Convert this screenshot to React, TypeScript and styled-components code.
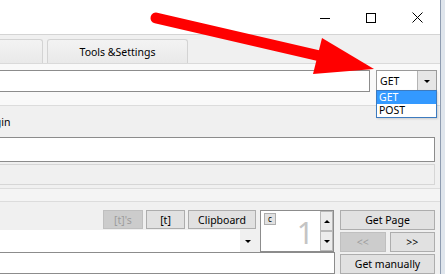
import React from 'react';
import styled, { createGlobalStyle } from 'styled-components';

const GlobalStyle = createGlobalStyle`
  html, body {
    margin: 0;
    padding: 0;
  }
  body {
    width: 445px;
    height: 274px;
    overflow: hidden;
    background: #dfe5ec;
    font-family: "Noto Sans", "Open Sans", sans-serif;
    font-size: 10.5px;
    color: #000;
  }
  * {
    box-sizing: border-box;
  }
`

const Stage = styled.div`
  position: relative;
  width: 445px;
  height: 274px;
  overflow: hidden;
`

const Window = styled.div`
  display: flex;
  flex-direction: column;
  width: 541px;
  height: 274px;
  margin-left: -100px;
  background: #f0f0f0;
  border-right: 1px solid #8d9bb0;
`

const TitleBar = styled.div`
  display: flex;
  justify-content: flex-end;
  height: 35px;
  padding-top: 1px;
  background: #fff;
  border-bottom: 1px solid #d4d4d4;
`

const CaptionButton = styled.div`
  display: flex;
  width: 46px;
  align-items: center;
  justify-content: center;
`

const TabStrip = styled.div`
  display: flex;
  gap: 4px;
  height: 29px;
  padding: 4px 0 0 2px;
  background: #f0f0f0;
  border-bottom: 1px solid #dadada;
`

const Tab = styled.div`
  display: flex;
  width: 141px;
  height: 24px;
  align-items: center;
  justify-content: center;
  background: linear-gradient(#f3f3f3, #e9e9e9);
  border: 1px solid #d3d3d3;
  border-bottom: none;
  border-radius: 3px 3px 0 0;
  font-size: 10.5px;
`

const TabPage = styled.div`
  display: flex;
  flex: 1;
  flex-direction: column;
  background: #f9f9f9;
`

const UrlRow = styled.div`
  display: flex;
  gap: 6px;
  padding: 6px 3px 0 8px;
  height: 41px;
`

const TextBox = styled.div<{ $height?: number }>`
  flex: 1;
  height: ${p => p.$height ?? 22}px;
  background: #fff;
  border: 1px solid #8c8c8c;
`

const Combo = styled.div`
  position: relative;
  display: flex;
  width: 61px;
  height: 22px;
  background: #fff;
  border: 1px solid #9a9a9a;
`

const ComboText = styled.div`
  display: flex;
  flex: 1;
  align-items: center;
  padding-left: 3px;
`

const ComboArrow = styled.div<{ $flat?: boolean }>`
  display: flex;
  width: ${p => (p.$flat ? 16 : 19)}px;
  align-items: center;
  justify-content: center;
  background: ${p => (p.$flat ? '#f0f0f0' : '#e6e6e6')};
  border-left: ${p => (p.$flat ? 'none' : '1px solid #b4b4b4')};

  &::after {
    content: '';
    border-left: 3px solid transparent;
    border-right: 3px solid transparent;
    border-top: 3px solid #000;
  }
`

const DropList = styled.div`
  position: absolute;
  top: calc(100% - 1px);
  left: -1px;
  right: -1px;
  background: #fff;
  border: 1px solid #3d7bbf;
  box-shadow: 1px 1px 2px rgba(0, 0, 0, 0.15);
`

const DropItem = styled.div<{ $active?: boolean }>`
  height: 13px;
  line-height: 13px;
  padding-left: 2px;
  background: ${p => (p.$active ? '#3399ff' : 'transparent')};
  color: ${p => (p.$active ? '#fff' : '#000')};
`

const Panel = styled.div`
  display: flex;
  flex: 1;
  flex-direction: column;
  padding: 8px 5px 0 8px;
  background: #f0f0f0;
  border-top: 1px solid #dcdcdc;
`

const Label = styled.div`
  height: 16px;
  margin: 0 0 7px 75px;
  line-height: 16px;
`

const DisabledBox = styled.div`
  height: 21px;
  margin-top: 2px;
  background: #f0f0f0;
  border: 1px solid #d6d6d6;
`

const Splitter = styled.div`
  height: 14px;
  margin: 3px -5px 0 -8px;
  background: #f4f4f4;
  border-top: 1px solid #dcdcdc;
  border-bottom: 1px solid #dcdcdc;
`

const Controls = styled.div`
  display: grid;
  grid-template-columns: 1fr 84px 95px;
  grid-template-rows: 20px 22px 22px;
  padding-top: 8px;
`

const ButtonRow = styled.div`
  display: flex;
  justify-content: flex-end;
  gap: 3px;
  height: 19px;
`

const Button = styled.div<{ $width?: number; $disabled?: boolean }>`
  display: flex;
  flex: ${p => (p.$width ? 'none' : 1)};
  width: ${p => (p.$width ? `${p.$width}px` : 'auto')};
  align-items: center;
  justify-content: center;
  background: ${p => (p.$disabled ? '#cccccc' : '#e1e1e1')};
  border: 1px solid ${p => (p.$disabled ? '#bfbfbf' : '#adadad')};
  color: ${p => (p.$disabled ? '#9c9c9c' : '#000')};
`

const FlatCombo = styled.div`
  display: flex;
  height: 22px;
  background: #fff;
`

const BottomBox = styled(TextBox)`
  grid-column: 1 / 3;
  margin-right: 5px;
`

const Spinner = styled.div`
  display: flex;
  grid-column: 2;
  grid-row: 1 / 3;
  width: 74px;
  height: 42px;
  margin-left: 4px;
  background: #fff;
  border: 1px solid #8c8c8c;
`

const SpinField = styled.div`
  display: flex;
  flex: 1;
  justify-content: space-between;
  padding: 2px 6px 0 3px;
`

const SmallButton = styled.div`
  display: flex;
  width: 12px;
  height: 12px;
  align-items: center;
  justify-content: center;
  background: #e1e1e1;
  border: 1px solid #adadad;
  font-size: 8px;
  line-height: 1;
`

const BigNumber = styled.div`
  align-self: flex-end;
  font-size: 30px;
  line-height: 36px;
  color: #c4c4c4;
`

const UpDown = styled.div`
  display: flex;
  flex-direction: column;
  width: 13px;
`

const Arrow = styled.div<{ $up?: boolean }>`
  display: flex;
  flex: 1;
  align-items: center;
  justify-content: center;
  background: #ececec;
  border: 1px solid #b9b9b9;

  &::after {
    content: '';
    border-left: 3px solid transparent;
    border-right: 3px solid transparent;
    ${p => (p.$up ? 'border-bottom: 3px solid #000;' : 'border-top: 3px solid #000;')}
  }
`

const SideButtons = styled.div`
  display: flex;
  grid-column: 3;
  grid-row: 1 / 4;
  flex-direction: column;
  gap: 2px;
`

const PagerRow = styled.div`
  display: flex;
  gap: 4px;
  height: 20px;
`

const ArrowOverlay = styled.svg`
  position: absolute;
  top: 0;
  left: 0;
  pointer-events: none;
`

const App: React.FC = () => {
  return (
    <Stage>
      <GlobalStyle />
      <Window>
        <TitleBar>
          <CaptionButton>
            <svg width="10" height="10"><line x1="0" y1="5.5" x2="10" y2="5.5" stroke="#000" /></svg>
          </CaptionButton>
          <CaptionButton>
            <svg width="10" height="10"><rect x="0.5" y="0.5" width="9" height="9" fill="none" stroke="#000" /></svg>
          </CaptionButton>
          <CaptionButton>
            <svg width="11" height="11">
              <path d="M0.5 0.5 L10.5 10.5 M10.5 0.5 L0.5 10.5" stroke="#000" />
            </svg>
          </CaptionButton>
        </TitleBar>
        <TabStrip>
          <Tab />
          <Tab>Tools &amp;Settings</Tab>
        </TabStrip>
        <TabPage>
          <UrlRow>
            <TextBox />
            <Combo>
              <ComboText>GET</ComboText>
              <ComboArrow />
              <DropList>
                <DropItem $active>GET</DropItem>
                <DropItem>POST</DropItem>
              </DropList>
            </Combo>
          </UrlRow>
          <Panel>
            <Label>Login</Label>
            <TextBox />
            <DisabledBox />
            <Splitter />
            <Controls>
              <ButtonRow>
                <Button $width={40} $disabled>[t]'s</Button>
                <Button $width={39}>[t]</Button>
                <Button $width={68}>Clipboard</Button>
              </ButtonRow>
              <FlatCombo>
                <ComboText />
                <ComboArrow $flat />
              </FlatCombo>
              <Spinner>
                <SpinField>
                  <SmallButton>c</SmallButton>
                  <BigNumber>1</BigNumber>
                </SpinField>
                <UpDown>
                  <Arrow $up />
                  <Arrow />
                </UpDown>
              </Spinner>
              <SideButtons>
                <Button>Get Page</Button>
                <PagerRow>
                  <Button $disabled>&lt;&lt;</Button>
                  <Button>&gt;&gt;</Button>
                </PagerRow>
                <Button>Get manually</Button>
              </SideButtons>
              <BottomBox />
            </Controls>
          </Panel>
        </TabPage>
      </Window>
      <ArrowOverlay width="445" height="274">
        <line x1="156" y1="18" x2="320" y2="56" stroke="#ff0000" strokeWidth="11" strokeLinecap="round" />
        <polygon points="322,38 374,69 313,74" fill="#ff0000" />
      </ArrowOverlay>
    </Stage>
  );
};

export default App;
